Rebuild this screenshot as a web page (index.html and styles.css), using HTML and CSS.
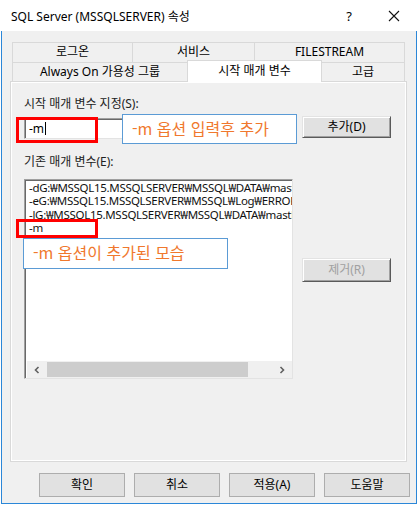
FILE: index.html
```html
<!DOCTYPE html>
<html lang="ko">
<head>
<meta charset="utf-8">
<link rel="stylesheet" href="styles.css">
</head>
<body>
<div class="window">
  <div class="titlebar">
    <span class="title">SQL Server (MSSQLSERVER) 속성</span>
    <span class="help">?</span>
    <svg class="close" width="12" height="12" viewBox="0 0 12 12"><path d="M1 1 L11 11 M11 1 L1 11" stroke="#111" stroke-width="1.1" fill="none"/></svg>
  </div>
  <div class="frame">
    <div class="tabs">
      <div class="tabrow">
        <div class="tab w1">로그온</div>
        <div class="tab w2">서비스</div>
        <div class="tab w3">FILESTREAM</div>
      </div>
      <div class="tabrow">
        <div class="tab w4">Always On 가용성 그룹</div>
        <div class="tab w5 selected">시작 매개 변수</div>
        <div class="tab w6">고급</div>
      </div>
    </div>
    <div class="panel">
      <div class="label">시작 매개 변수 지정(S):</div>
      <div class="inputrow">
        <div class="input">-m<span class="caret"></span></div>
        <div class="btn">추가(D)</div>
      </div>
      <div class="label label2">기존 매개 변수(E):</div>
      <div class="listrow">
        <div class="listbox">
          <div class="items">
            <div class="item">-dG:₩MSSQL15.MSSQLSERVER₩MSSQL₩DATA₩master.mdf</div>
            <div class="item">-eG:₩MSSQL15.MSSQLSERVER₩MSSQL₩Log₩ERRORLOG</div>
            <div class="item">-lG:₩MSSQL15.MSSQLSERVER₩MSSQL₩DATA₩mastlog.ldf</div>
            <div class="item">-m</div>
          </div>
          <div class="hscroll">
            <svg class="arrow" width="8" height="8" viewBox="0 0 8 8"><path d="M5.5 1 L2.5 4 L5.5 7" stroke="#606060" stroke-width="1.6" fill="none"/></svg>
            <div class="track"><div class="thumb"></div></div>
            <svg class="arrow" width="8" height="8" viewBox="0 0 8 8"><path d="M2.5 1 L5.5 4 L2.5 7" stroke="#606060" stroke-width="1.6" fill="none"/></svg>
          </div>
        </div>
        <div class="btn disabled remove">제거(R)</div>
      </div>
    </div>
    <div class="buttons">
      <div class="fbtn">확인</div>
      <div class="fbtn">취소</div>
      <div class="fbtn">적용(A)</div>
      <div class="fbtn">도움말</div>
    </div>
  </div>
  <div class="mark red red1"></div>
  <div class="mark red red2"></div>
  <div class="mark note note1">-m 옵션 입력후 추가</div>
  <div class="mark note note2">-m 옵션이 추가된 모습</div>
</div>
</body>
</html>
```

FILE: styles.css
```css
* { box-sizing: border-box; }
html, body { margin: 0; padding: 0; background: #fff; }
body {
  font-family: "Noto Sans", "Noto Sans CJK KR", sans-serif;
  font-size: 12px;
  color: #000;
}
.window {
  position: relative;
  width: 416px;
  height: 504px;
  margin-left: 1px;
}
.titlebar {
  height: 31px;
  display: flex;
  align-items: center;
  padding-left: 10px;
  background: #fff;
}
.title { font-size: 12px; flex: 1; }
.help { font-size: 13px; margin-right: 36px; }
.close { margin-right: 17px; }
.frame {
  height: 473px;
  background: #f0f0f0;
  border: 1px solid #2b87d8;
  border-top: none;
  padding: 11px 0 0 8px;
}
.tabs { margin-left: 2px; }
.tabrow { display: flex; align-items: flex-start; }
.tab {
  border: 1px solid #d9d9d9;
  border-bottom: none;
  margin-left: -1px;
  height: 20px;
  line-height: 18px;
  text-align: center;
  background: #f0f0f0;
}
.tab:first-child { margin-left: 0; }
.tabrow + .tabrow .tab { height: 19px; line-height: 18px; }
.w1 { width: 121px; }
.w2 { width: 123px; }
.w3 { width: 151px; }
.w4 { width: 176px; }
.w5 { width: 135px; }
.w6 { width: 84px; }
.tabrow + .tabrow .tab.selected {
  position: relative;
  z-index: 2;
  margin-top: -2px;
  margin-bottom: -1px;
  height: 22px;
  line-height: 19px;
  background: #fff;
}
.panel {
  width: 397px;
  height: 381px;
  border: 1px solid #d9d9d9;
  box-shadow: inset 1px 1px 0 #fff, inset -1px -1px 0 #fff;
  padding: 14px 0 0 13px;
  position: relative;
  z-index: 1;
}
.label { height: 16px; line-height: 16px; color: #222; }
.label2 { margin-top: 15px; }
.inputrow { display: flex; margin-top: 4px; align-items: flex-start; }
.input {
  width: 269px;
  height: 21px;
  margin-top: 2px;
  background: #fff;
  border-top: 1px solid #a0a0a0;
  border-left: 1px solid #a0a0a0;
  border-right: 1px solid #e3e3e3;
  border-bottom: 1px solid #e3e3e3;
  box-shadow: inset 1px 1px 0 #696969;
  padding-left: 4px;
  line-height: 19px;
  display: flex;
  align-items: center;
}
.caret { display: inline-block; width: 1px; height: 13px; background: #000; margin-left: 1px; }
.btn {
  width: 89px;
  height: 22px;
  margin-left: 9px;
  background: #e1e1e1;
  border-top: 1px solid #e3e3e3;
  border-left: 1px solid #e3e3e3;
  border-right: 1px solid #5a5a5a;
  border-bottom: 1px solid #5a5a5a;
  box-shadow: inset 1px 1px 0 #fff, inset -1px -1px 0 #a0a0a0;
  text-align: center;
  line-height: 19px;
}
.btn.disabled { color: #a0a0a0; }
.remove { margin-top: 79px; height: 24px; line-height: 21px; }
.listrow { display: flex; margin-top: 9px; align-items: flex-start; }
.listbox {
  width: 269px;
  height: 200px;
  background: #fff;
  border-top: 1px solid #a0a0a0;
  border-left: 1px solid #a0a0a0;
  border-right: 1px solid #e3e3e3;
  border-bottom: 1px solid #e3e3e3;
  box-shadow: inset 1px 1px 0 #696969;
  display: flex;
  flex-direction: column;
  padding: 1px 0 0 2px;
}
.items { flex: 1; overflow: hidden; padding-left: 2px; padding-top: 0; }
.item {
  white-space: nowrap;
  height: 13.3px;
  line-height: 13px;
  font-size: 11.5px;
  letter-spacing: -0.3px;
  color: #111;
}
.hscroll {
  height: 17px;
  display: flex;
  align-items: center;
  background: #f0f0f0;
}
.arrow { margin: 0 6px 0 6px; flex: none; }
.track { flex: 1; height: 17px; display: flex; align-items: center; }
.thumb { width: 201px; height: 15px; background: #cdcdcd; }
.buttons {
  display: flex;
  gap: 9px;
  margin: 11px 0 0 29px;
}
.fbtn {
  width: 86px;
  height: 24px;
  background: #e1e1e1;
  border: 1px solid #adadad;
  text-align: center;
  line-height: 22px;
}
.mark { position: absolute; z-index: 5; }
.red { border: 3px solid #ff0000; }
.red1 { left: 15px; top: 117px; width: 82px; height: 26px; }
.red2 { left: 15px; top: 219px; width: 82px; height: 19px; }
.note {
  border: 1px solid #5b9bd5;
  background: #fff;
  color: #f0782d;
  font-family: "Noto Sans CJK KR", sans-serif;
  font-size: 16px;
  line-height: 26px;
  padding-left: 9px;
  white-space: nowrap;
}
.note1 { left: 121px; top: 114px; width: 175px; height: 30px; }
.note2 { left: 22px; top: 238px; width: 205px; height: 31px; }
```
